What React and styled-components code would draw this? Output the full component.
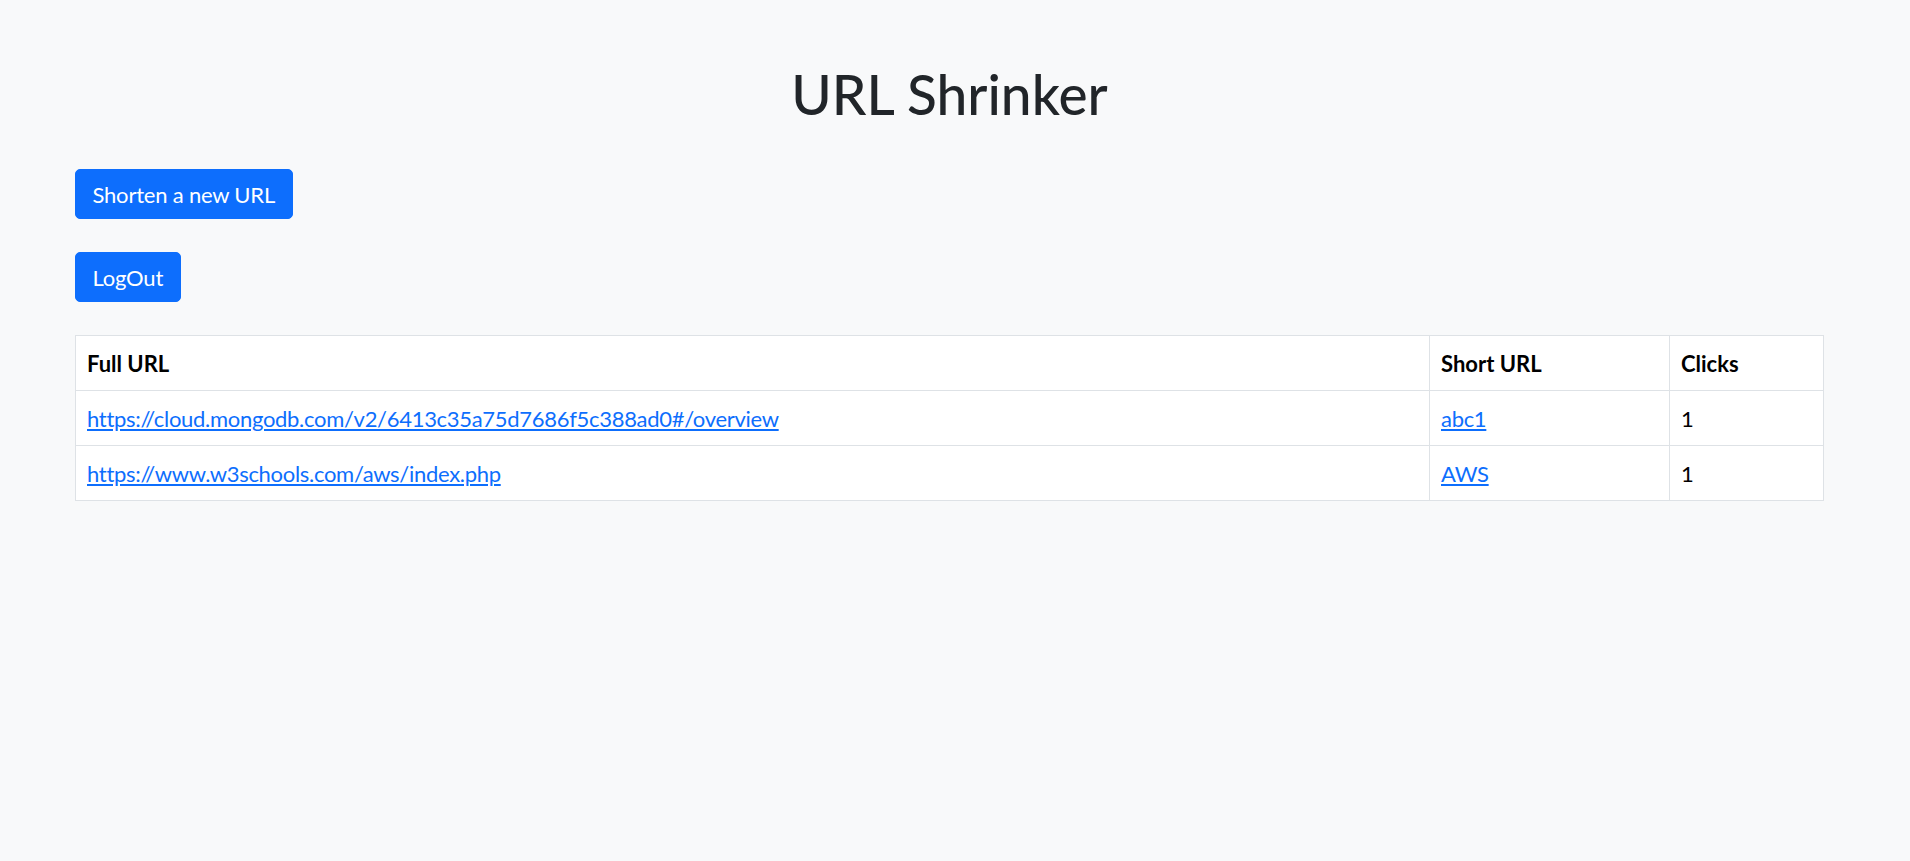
import React from "react";
import styled, { createGlobalStyle } from "styled-components";

const GlobalStyle = createGlobalStyle`
  html, body {
    margin: 0;
    padding: 0;
    background-color: #f8f9fa;
  }
  body {
    font-family: "Segoe UI", Lato, "Noto Sans", "Liberation Sans", sans-serif;
    font-size: 22px;
    line-height: 1.5;
    color: #212529;
  }
`;

const Page = styled.div`
  min-height: 861px;
  padding: 61px 86px 0 75px;
  box-sizing: border-box;
`;

const Title = styled.h1`
  margin: 0 0 42px;
  font-size: 55px;
  font-weight: 500;
  line-height: 1.2;
  text-align: center;
  color: #212529;
`;

const ButtonRow = styled.div`
  margin-bottom: 33px;
`;

const Button = styled.button`
  display: inline-block;
  font-family: inherit;
  font-size: 22px;
  line-height: 33px;
  letter-spacing: -0.2px;
  padding: 7.5px 16.5px;
  color: #fff;
  background-color: #0d6efd;
  border: 1px solid #0d6efd;
  border-radius: 5px;
  cursor: pointer;
  &:hover {
    background-color: #0b5ed7;
  }
`;

const Table = styled.table`
  width: 100%;
  border-collapse: collapse;
  background-color: #fff;
  color: #000;
  table-layout: fixed;
`;

const HeadCell = styled.th`
  box-sizing: border-box;
  width: ${(p) => p.$width || "auto"};
  text-align: left;
  font-weight: 700;
  padding: 10.5px 11px;
  border: 1px solid #dee2e6;
`;

const Cell = styled.td`
  padding: 10.5px 11px;
  border: 1px solid #dee2e6;
  white-space: nowrap;
  letter-spacing: -0.3px;
`;

const Link = styled.a`
  color: #0d6efd;
  text-decoration: underline;
`;

const urls = [
  {
    full: "https://cloud.mongodb.com/v2/6413c35a75d7686f5c388ad0#/overview",
    short: "abc1",
    clicks: 1,
  },
  {
    full: "https://www.w3schools.com/aws/index.php",
    short: "AWS",
    clicks: 1,
  },
];

export default function App() {
  return (
    <>
      <GlobalStyle />
      <Page>
        <Title>URL Shrinker</Title>
        <ButtonRow>
          <Button>Shorten a new URL</Button>
        </ButtonRow>
        <ButtonRow>
          <Button>LogOut</Button>
        </ButtonRow>
        <Table>
          <thead>
            <tr>
              <HeadCell>Full URL</HeadCell>
              <HeadCell $width="240px">Short URL</HeadCell>
              <HeadCell $width="154px">Clicks</HeadCell>
            </tr>
          </thead>
          <tbody>
            {urls.map((u) => (
              <tr key={u.short}>
                <Cell>
                  <Link href={u.full}>{u.full}</Link>
                </Cell>
                <Cell>
                  <Link href={u.short}>{u.short}</Link>
                </Cell>
                <Cell>{u.clicks}</Cell>
              </tr>
            ))}
          </tbody>
        </Table>
      </Page>
    </>
  );
}
